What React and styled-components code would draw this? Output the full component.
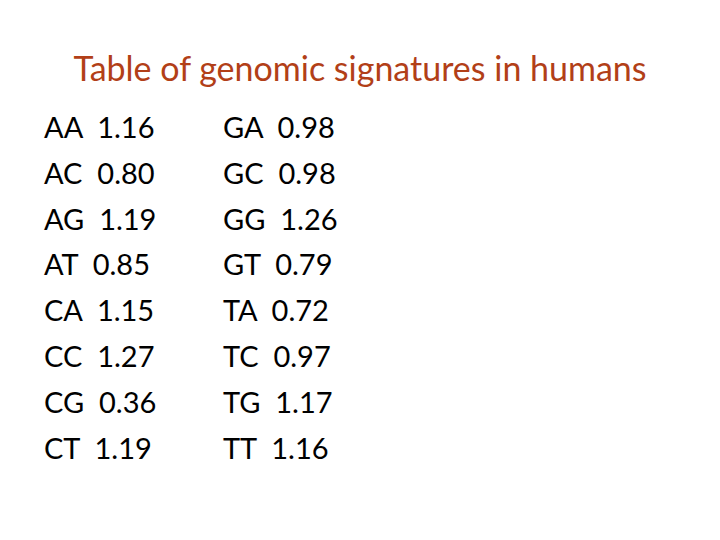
import React from "react";
import styled, { createGlobalStyle } from "styled-components";

const Global = createGlobalStyle`
  html, body { margin: 0; padding: 0; background: #ffffff; }
  body { font-family: Lato, "Open Sans", sans-serif; }
`;

const Slide = styled.div`
  width: 720px;
  height: 540px;
  background: #ffffff;
  box-sizing: border-box;
  padding-top: 46px;
  display: flex;
  flex-direction: column;
`;

const Title = styled.h1`
  margin: 0;
  font-family: Lato, sans-serif;
  font-weight: 400;
  font-size: 34px;
  line-height: 44px;
  color: #b23f18;
  text-align: center;
`;

const Columns = styled.div`
  display: flex;
  padding-left: 44px;
  margin-top: 14px;
`;

const Column = styled.div`
  display: flex;
  flex-direction: column;
  width: ${(p) => p.$width}px;
`;

const Row = styled.div`
  font-family: Lato, sans-serif;
  font-size: 29px;
  line-height: 45.8px;
  color: #000000;
  white-space: pre;
`;

const left = [
  ["AA", "1.16"],
  ["AC", "0.80"],
  ["AG", "1.19"],
  ["AT", "0.85"],
  ["CA", "1.15"],
  ["CC", "1.27"],
  ["CG", "0.36"],
  ["CT", "1.19"],
];
const right = [
  ["GA", "0.98"],
  ["GC", "0.98"],
  ["GG", "1.26"],
  ["GT", "0.79"],
  ["TA", "0.72"],
  ["TC", "0.97"],
  ["TG", "1.17"],
  ["TT", "1.16"],
];

export default function App() {
  return (
    <>
      <Global />
      <Slide>
        <Title>Table of genomic signatures in humans</Title>
        <Columns>
          <Column $width={179}>
            {left.map(([k, v]) => (
              <Row key={k}>{`${k}  ${v}`}</Row>
            ))}
          </Column>
          <Column $width={200}>
            {right.map(([k, v]) => (
              <Row key={k}>{`${k}  ${v}`}</Row>
            ))}
          </Column>
        </Columns>
      </Slide>
    </>
  );
}
